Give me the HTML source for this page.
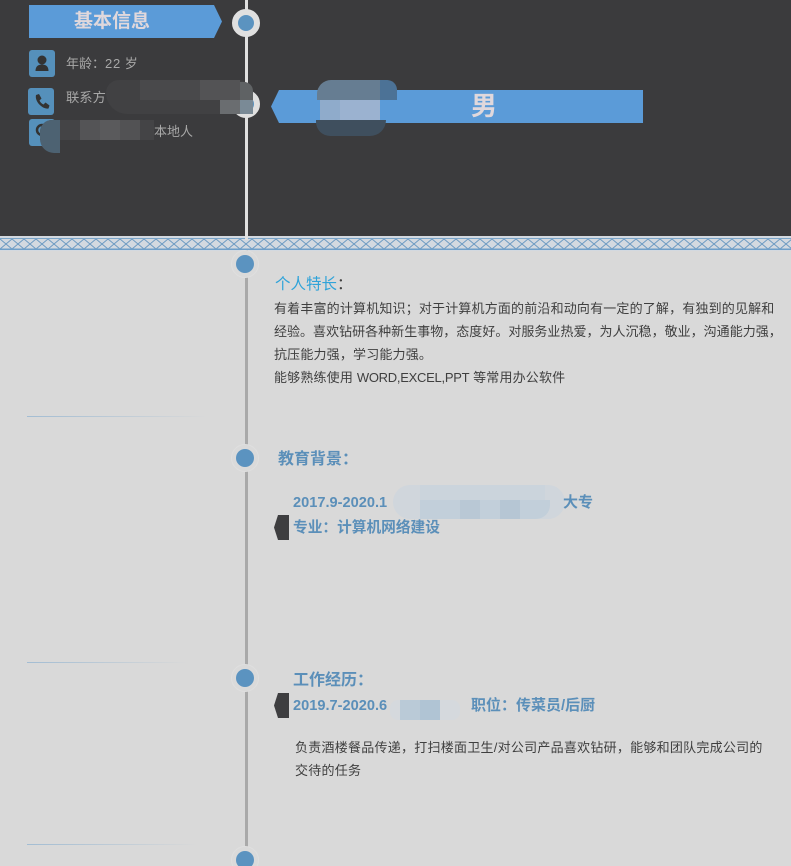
<!DOCTYPE html>
<html lang="zh">
<head>
<meta charset="utf-8">
<style>
html,body{margin:0;padding:0;height:866px;overflow:hidden}
body{width:791px;position:relative;background:#d9d9d9;font-family:"Liberation Sans","Noto Sans CJK SC",sans-serif}
.a{position:absolute}
.t{position:absolute;white-space:nowrap;line-height:20px}
.body{font-size:13px;color:#3f3f3f;letter-spacing:.17px;left:274px}
.b{font-weight:700;color:#5b8fb9;font-size:15px}
.ic{position:absolute;width:26px;height:27px;border-radius:3px;background:#5590bb}
.ring{position:absolute;left:231px;width:28px;height:28px;box-sizing:border-box;border-radius:50%;background:#dadada;border:1px solid #dfdfdf}
.ring i{position:absolute;left:4px;top:4px;width:18px;height:18px;border-radius:50%;background:#5b93c0}
.line{position:absolute;left:27px;height:1px;background:linear-gradient(90deg,#a3bdd3,#d9d9d9)}
.tag{position:absolute;left:274px;width:15px;height:25px;background:#3e3e40;clip-path:polygon(4px 0,100% 0,100% 100%,4px 100%,0 50%)}
</style>
</head>
<body>
<div class="a" style="left:0;top:0;width:791px;height:236px;background:#3b3b3d"></div>

<svg class="a" style="left:0;top:236px" width="791" height="15">
<defs><pattern id="p" width="12" height="10" patternUnits="userSpaceOnUse" y="3">
<path d="M0 0L12 10M12 0L0 10" stroke="#6c9ac2" stroke-width="1" fill="none"/></pattern></defs>
<rect width="791" height="15" fill="#d3d9e0"/>
<rect y="3" width="791" height="10" fill="url(#p)"/>
<rect y="2" width="791" height="1" fill="#7ba5c9"/>
<rect y="12.500" width="791" height="1.500" fill="#6f9fc9"/>
</svg>

<div class="a" style="left:245px;top:0;width:3px;height:240px;background:#e0e0e0"></div>
<div class="a" style="left:245px;top:250px;width:3px;height:616px;background:#a9a9a9"></div>

<div class="a" style="left:29px;top:5px;width:193px;height:33px;background:#5b9bd8;clip-path:polygon(0 0,185px 0,100% 50%,185px 100%,0 100%)"></div>
<div class="t" style="left:74px;top:12px;font-size:19px;font-weight:700;color:#e0d8dc">基本信息</div>
<div class="a" style="left:232px;top:9px;width:28px;height:28px;box-sizing:border-box;border-radius:50%;background:#5b93c0;border:6px solid #e0e0e0"></div>

<div class="ic" style="left:29px;top:50px"></div>
<svg class="a" style="left:29px;top:50px" width="26" height="27"><circle cx="13" cy="10" r="4.500" fill="#333"/><path d="M6.500 21c0-5 3-6.500 6.500-6.500s6.500 1.500 6.500 6.500z" fill="#333"/></svg>
<div class="t" style="left:66px;top:54px;font-size:13px;color:#a8a8a8">年龄：<span style="letter-spacing:.8px">22</span> 岁</div>

<div class="ic" style="left:28px;top:88px"></div>
<svg class="a" style="left:28px;top:88px" width="26" height="27"><path d="M8 7l3-1 2.500 4.500-2 2c1 2 2 3 4 4l2-2 4 3-1 3c-6 1-14-7-12.500-13.500z" fill="#333"/></svg>
<div class="t" style="left:66px;top:88px;font-size:13.300px;color:#a8a8a8">联系方</div>

<div class="ic" style="left:29px;top:119px"></div>
<svg class="a" style="left:29px;top:119px" width="26" height="27"><circle cx="13" cy="11" r="5" fill="none" stroke="#333" stroke-width="2.500"/></svg>
<div class="t" style="left:154px;top:122px;font-size:13px;color:#a8a8a8">本地人</div>

<div class="a" style="left:232px;top:90px;width:28px;height:28px;box-sizing:border-box;border-radius:50%;background:#5b93c0;border:6px solid #e0e0e0"></div>

<!-- mosaic: contact -->
<div class="a" style="left:106px;top:80px;width:147px;height:34px;background:#414143;border-radius:18px 22px 20px 30px"></div>
<div class="a" style="left:140px;top:80px;width:60px;height:20px;background:#49494b"></div>
<div class="a" style="left:200px;top:80px;width:40px;height:20px;background:#535355"></div>
<div class="a" style="left:240px;top:82px;width:13px;height:18px;background:#5f6264;border-radius:0 9px 0 0"></div>
<div class="a" style="left:220px;top:100px;width:20px;height:14px;background:#6a6d70"></div>
<div class="a" style="left:240px;top:100px;width:13px;height:14px;background:#7a8a96"></div>

<!-- mosaic: address -->
<div class="a" style="left:40px;top:120px;width:114px;height:20px;background:#444446;border-radius:12px 0 0 0"></div>
<div class="a" style="left:40px;top:120px;width:20px;height:33px;background:#4d6272;border-radius:12px 0 0 14px"></div>
<div class="a" style="left:80px;top:120px;width:20px;height:20px;background:#545456"></div>
<div class="a" style="left:100px;top:120px;width:20px;height:20px;background:#5a5a5c"></div>
<div class="a" style="left:120px;top:120px;width:20px;height:20px;background:#525254"></div>

<!-- gender bar -->
<div class="a" style="left:271px;top:90px;width:372px;height:33px;background:#5b9bd8;clip-path:polygon(8px 0,100% 0,100% 100%,8px 100%,0 50%)"></div>
<div class="t" style="left:471px;top:94px;font-size:26px;font-weight:700;line-height:24px;color:#e0d8dc">男</div>
<div class="a" style="left:317px;top:80px;width:80px;height:20px;background:#667d92;border-radius:14px 12px 0 0"></div>
<div class="a" style="left:380px;top:80px;width:17px;height:20px;background:#4c7296;border-radius:0 10px 0 0"></div>
<div class="a" style="left:320px;top:100px;width:20px;height:20px;background:#8fabcb"></div>
<div class="a" style="left:340px;top:100px;width:40px;height:20px;background:#9bb2d0"></div>
<div class="a" style="left:316px;top:120px;width:70px;height:16px;background:#3f4f5e;border-radius:0 0 34px 30px"></div>

<!-- section dots -->
<div class="ring" style="top:250px"><i></i></div>
<div class="ring" style="top:444px"><i></i></div>
<div class="ring" style="top:664px"><i></i></div>
<div class="ring" style="top:846px"><i></i></div>

<div class="line" style="top:416px;width:180px"></div>
<div class="line" style="top:662px;width:160px"></div>
<div class="line" style="top:844px;width:170px"></div>

<!-- skills -->
<div class="t" style="left:275px;top:275px;font-size:15.500px;color:#2fa3d9">个人特长<span style="color:#3f3f3f">：</span></div>
<div class="t body" style="top:299px">有着丰富的计算机知识；对于计算机方面的前沿和动向有一定的了解，有独到的见解和</div>
<div class="t body" style="top:322px;letter-spacing:.02px">经验。喜欢钻研各种新生事物，态度好。对服务业热爱，为人沉稳，敬业，沟通能力强，</div>
<div class="t body" style="top:345px">抗压能力强，学习能力强。</div>
<div class="t body" style="top:368px">能够熟练使用 <span style="letter-spacing:-.27px">WORD,EXCEL,PPT</span> 等常用办公软件</div>

<!-- education -->
<div class="t b" style="left:278px;top:450px;font-size:16px">教育背景：</div>
<div class="t b" style="left:293px;top:493px;font-size:14.600px">2017.9-2020.1</div>
<div class="a" style="left:393px;top:485px;width:172px;height:34px;background:#d0d6dc;border-radius:17px"></div>
<div class="a" style="left:420px;top:485px;width:125px;height:15px;background:#cbd4dc"></div>
<div class="a" style="left:420px;top:500px;width:130px;height:19px;background:#c2cfda;border-radius:0 0 14px 0"></div>
<div class="a" style="left:460px;top:500px;width:20px;height:19px;background:#b9c8d5"></div>
<div class="a" style="left:500px;top:500px;width:20px;height:19px;background:#b6c6d4"></div>
<div class="t b" style="left:563px;top:493px">大专</div>
<div class="tag" style="top:515px"></div>
<div class="t b" style="left:293px;top:518px;font-size:14.700px">专业：计算机网络建设</div>

<!-- work -->
<div class="t b" style="left:293px;top:671px;font-size:16px">工作经历：</div>
<div class="tag" style="top:693px"></div>
<div class="t b" style="left:293px;top:696px;font-size:14.600px">2019.7-2020.6</div>
<div class="a" style="left:390px;top:700px;width:70px;height:20px;background:#d5d9dd;border-radius:8px"></div>
<div class="a" style="left:400px;top:700px;width:20px;height:20px;background:#bacad7"></div>
<div class="a" style="left:420px;top:700px;width:20px;height:20px;background:#b0c4d4"></div>
<div class="t b" style="left:471px;top:696px">职位：传菜员/后厨</div>

<div class="t body" style="left:295px;top:738px;letter-spacing:.25px">负责酒楼餐品传递，打扫楼面卫生/对公司产品喜欢钻研，能够和团队完成公司的</div>
<div class="t body" style="left:295px;top:761px;letter-spacing:.25px">交待的任务</div>
</body>
</html>
